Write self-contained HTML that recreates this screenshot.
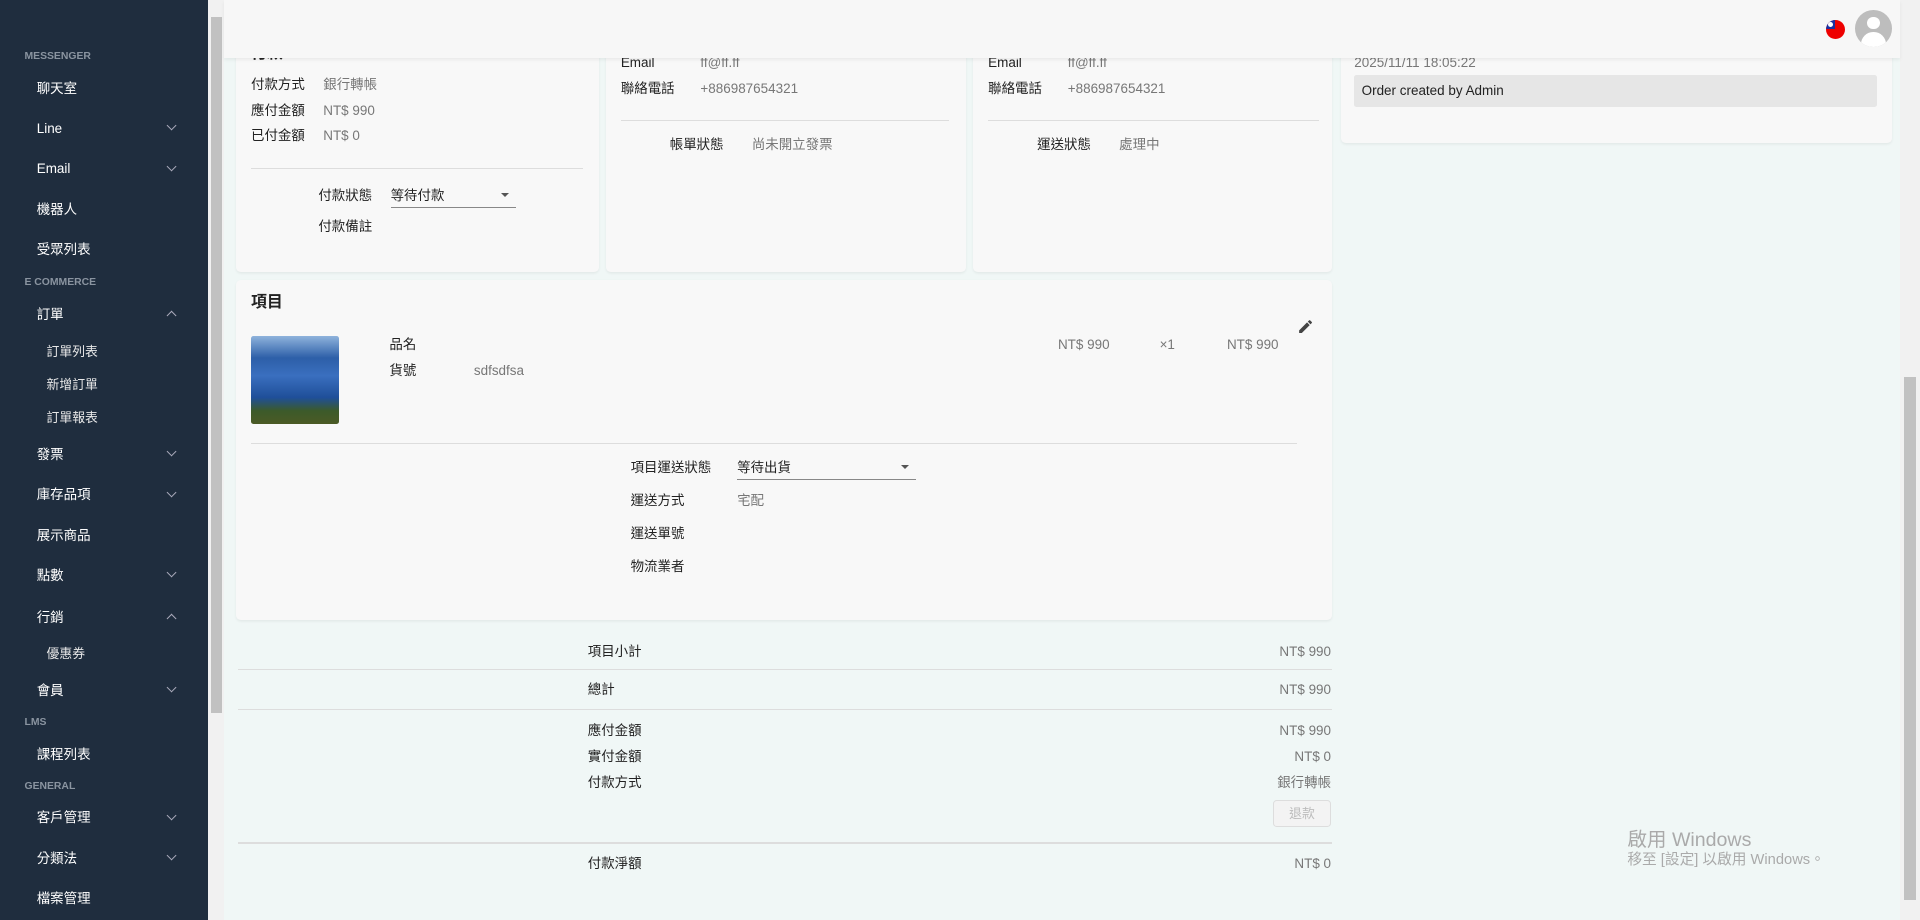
<!DOCTYPE html>
<html><head><meta charset="utf-8"><style>
html{zoom:1.22449}
body{margin:0;width:1568px;height:751px;overflow:hidden;position:relative;background:#f0f7f6;font-family:"Liberation Sans","Noto Sans CJK TC",sans-serif;font-size:11px;color:#222}
.a{position:absolute;white-space:nowrap;line-height:14px;margin-top:1px}
.g{color:#777}
#sb{position:absolute;left:0;top:0;width:170px;height:751px;background:#1f2d3e}
#sb .s{position:absolute;left:20px;font-size:8.5px;font-weight:bold;color:#8a94a0;line-height:12px;margin-top:1px}
#sb .i{position:absolute;left:30px;color:#fff;font-size:11px;line-height:14px;margin-top:1px}
#sb .j{position:absolute;left:38px;color:#e8e8e8;font-size:10.5px;line-height:14px;margin-top:1px}
.ch{position:absolute;left:137px;width:5px;height:5px;border-right:1.2px solid #aab;border-bottom:1.2px solid #aab;transform:rotate(45deg)}
.cu{transform:rotate(-135deg)}
.card{position:absolute;background:#f8f8f8;border-radius:4px;box-shadow:0 1px 2px rgba(0,0,0,.06)}
.ln{position:absolute;height:1px;background:#ddd}
.arr{position:absolute;width:0;height:0;border-left:4px solid transparent;border-right:4px solid transparent;border-top:4px solid #555}
.r{position:absolute;right:481px;color:#777;line-height:14px;margin-top:1px}
</style></head><body>
<div id="sb">
<div class="s" style="top:40px">MESSENGER</div>
<div class="i" style="top:64px">聊天室</div>
<div class="i" style="top:97px">Line</div><div class="ch" style="top:100px"></div>
<div class="i" style="top:130px">Email</div><div class="ch" style="top:133px"></div>
<div class="i" style="top:163px">機器人</div>
<div class="i" style="top:196px">受眾列表</div>
<div class="s" style="top:224px">E COMMERCE</div>
<div class="i" style="top:249px">訂單</div><div class="ch cu" style="top:255px"></div>
<div class="j" style="top:279px">訂單列表</div>
<div class="j" style="top:306px">新增訂單</div>
<div class="j" style="top:333px">訂單報表</div>
<div class="i" style="top:363px">發票</div><div class="ch" style="top:366px"></div>
<div class="i" style="top:396px">庫存品項</div><div class="ch" style="top:399px"></div>
<div class="i" style="top:429px">展示商品</div>
<div class="i" style="top:462px">點數</div><div class="ch" style="top:465px"></div>
<div class="i" style="top:496px">行銷</div><div class="ch cu" style="top:502px"></div>
<div class="j" style="top:526px">優惠券</div>
<div class="i" style="top:556px">會員</div><div class="ch" style="top:559px"></div>
<div class="s" style="top:584px">LMS</div>
<div class="i" style="top:608px">課程列表</div>
<div class="s" style="top:636px">GENERAL</div>
<div class="i" style="top:660px">客戶管理</div><div class="ch" style="top:663px"></div>
<div class="i" style="top:693px">分類法</div><div class="ch" style="top:696px"></div>
<div class="i" style="top:726px">檔案管理</div>
</div>
<div style="position:absolute;left:170px;top:0;width:13px;height:751px;background:#f1f1f1"></div>
<div style="position:absolute;left:172px;top:14px;width:9px;height:568px;background:#c1c1c1"></div>
<div style="position:absolute;left:1552px;top:0;width:16px;height:751px;background:#f1f1f1"></div>
<div style="position:absolute;left:1555px;top:308px;width:10px;height:427px;background:#c1c1c1"></div>

<div class="card" style="left:193px;top:20px;width:296px;height:202px"></div>
<div class="card" style="left:495px;top:20px;width:294px;height:202px"></div>
<div class="card" style="left:795px;top:20px;width:293px;height:202px"></div>
<div class="card" style="left:1095px;top:20px;width:450px;height:97px"></div>
<div class="card" style="left:193px;top:229px;width:895px;height:277px"></div>

<div class="a" style="left:205px;top:36px;font-weight:bold;font-size:13px">付款</div>
<div class="a" style="left:205px;top:61px">付款方式</div><div class="a g" style="left:264px;top:61px">銀行轉帳</div>
<div class="a" style="left:205px;top:82px">應付金額</div><div class="a g" style="left:264px;top:82px">NT$ 990</div>
<div class="a" style="left:205px;top:103px">已付金額</div><div class="a g" style="left:264px;top:103px">NT$ 0</div>
<div class="ln" style="left:205px;top:137px;width:271px"></div>
<div class="a" style="left:260px;top:152px">付款狀態</div><div class="a" style="left:319px;top:152px">等待付款</div>
<div class="arr" style="left:409px;top:158px"></div>
<div class="ln" style="left:319px;top:169px;width:102px;background:#888"></div>
<div class="a" style="left:260px;top:177px">付款備註</div>

<div class="a" style="left:507px;top:43px">Email</div><div class="a g" style="left:572px;top:43px">ff@ff.ff</div>
<div class="a" style="left:507px;top:64px">聯絡電話</div><div class="a g" style="left:572px;top:64px">+886987654321</div>
<div class="ln" style="left:507px;top:98px;width:268px"></div>
<div class="a" style="left:547px;top:110px">帳單狀態</div><div class="a g" style="left:614px;top:110px">尚未開立發票</div>

<div class="a" style="left:807px;top:43px">Email</div><div class="a g" style="left:872px;top:43px">ff@ff.ff</div>
<div class="a" style="left:807px;top:64px">聯絡電話</div><div class="a g" style="left:872px;top:64px">+886987654321</div>
<div class="ln" style="left:807px;top:98px;width:270px"></div>
<div class="a" style="left:847px;top:110px">運送狀態</div><div class="a g" style="left:914px;top:110px">處理中</div>

<div class="a g" style="left:1106px;top:43px">2025/11/11 18:05:22</div>
<div style="position:absolute;left:1106px;top:61px;width:427px;height:26px;background:#e6e6e6;border-radius:2px"></div>
<div class="a" style="left:1112px;top:66px">Order created by Admin</div>

<div class="a" style="left:205px;top:239px;font-weight:bold;font-size:13px">項目</div>
<div style="position:absolute;left:205px;top:274px;width:72px;height:72px;border-radius:2px;background:linear-gradient(180deg,#8fb3dc 0%,#2d5fa8 25%,#3a6fbf 45%,#1f4f99 70%,#3c5a2a 85%,#4b5a25 100%)"></div>
<div class="a" style="left:318px;top:273px">品名</div>
<div class="a" style="left:318px;top:295px">貨號</div><div class="a g" style="left:387px;top:295px">sdfsdfsa</div>
<div class="a g" style="left:864px;top:273px">NT$ 990</div>
<div class="a g" style="left:947px;top:273px">×1</div>
<div class="a g" style="left:1002px;top:273px">NT$ 990</div>
<svg style="position:absolute;left:1059px;top:260px" width="14" height="14" viewBox="0 0 24 24"><path fill="#444" d="M3 17.25V21h3.75L17.81 9.94l-3.75-3.75L3 17.25zM20.71 7.040a1 1 0 000-1.41l-2.34-2.34a1 1 0 00-1.41 0l-1.83 1.83 3.75 3.75 1.83-1.830z"/></svg>
<div class="ln" style="left:205px;top:362px;width:854px"></div>
<div class="a" style="left:515px;top:374px">項目運送狀態</div><div class="a" style="left:602px;top:374px">等待出貨</div>
<div class="arr" style="left:736px;top:380px"></div>
<div class="ln" style="left:602px;top:391px;width:146px;background:#888"></div>
<div class="a" style="left:515px;top:401px">運送方式</div><div class="a g" style="left:602px;top:401px">宅配</div>
<div class="a" style="left:515px;top:428px">運送單號</div>
<div class="a" style="left:515px;top:455px">物流業者</div>

<div class="a" style="left:480px;top:524px">項目小計</div><div class="r" style="top:524px">NT$ 990</div>
<div class="ln" style="left:194px;top:546px;width:894px"></div>
<div class="a" style="left:480px;top:555px">總計</div><div class="r" style="top:555px">NT$ 990</div>
<div class="ln" style="left:194px;top:579px;width:894px"></div>
<div class="a" style="left:480px;top:589px">應付金額</div><div class="r" style="top:589px">NT$ 990</div>
<div class="a" style="left:480px;top:610px">實付金額</div><div class="r" style="top:610px">NT$ 0</div>
<div class="a" style="left:480px;top:631px">付款方式</div><div class="r" style="top:631px">銀行轉帳</div>
<div style="position:absolute;left:1040px;top:653px;width:45px;height:21px;border:1px solid #ddd;border-radius:3px;background:#f3f3f3;color:#bbb;text-align:center;line-height:21px;font-size:10.5px">退款</div>
<div class="ln" style="left:194px;top:688px;width:894px"></div>
<div class="a" style="left:480px;top:697px">付款淨額</div><div class="r" style="top:697px">NT$ 0</div>

<div class="a" style="left:1329px;top:676px;font-size:16px;line-height:18px;color:#aaa">啟用 Windows</div>
<div class="a" style="left:1329px;top:695px;font-size:12px;color:#aaa">移至 [設定] 以啟用 Windows。</div>

<div style="position:absolute;left:183px;top:0;width:1369px;height:47px;background:#f7f7f7;box-shadow:0 2px 3px rgba(0,0,0,.06)"></div>
<div style="position:absolute;left:1491px;top:16px;width:16px;height:16px;border-radius:50%;background:#e00;overflow:hidden"><div style="width:8px;height:8px;background:#1a2fa0;position:relative"><div style="position:absolute;left:2px;top:2px;width:4px;height:4px;border-radius:50%;background:#fff"></div></div></div>
<div style="position:absolute;left:1515px;top:8px;width:30px;height:30px;border-radius:50%;background:#bdbdbd;overflow:hidden">
<div style="position:absolute;left:10px;top:6px;width:10px;height:10px;border-radius:50%;background:#fff"></div>
<div style="position:absolute;left:5px;top:18px;width:20px;height:12px;border-radius:10px 10px 0 0;background:#fff"></div></div>
</body></html>
